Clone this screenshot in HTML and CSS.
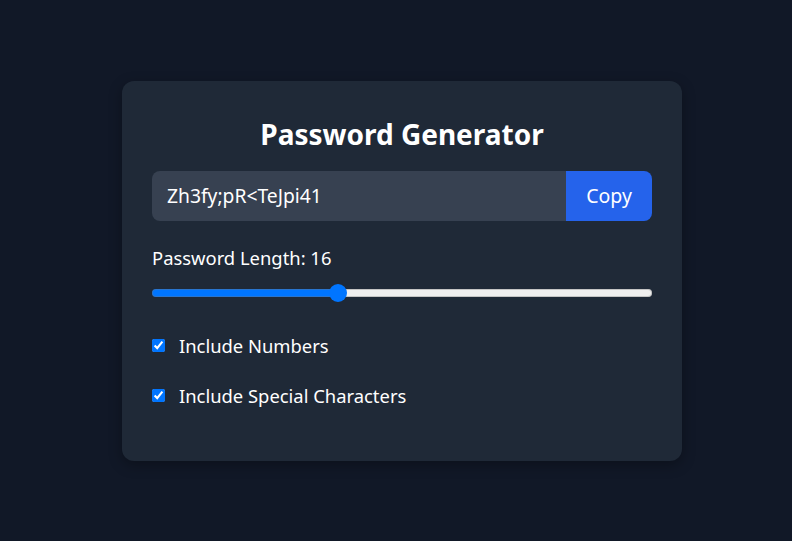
FILE: index.html
```html
<!DOCTYPE html>
<html lang="en">
<head>
<meta charset="utf-8">
<title>Password Generator</title>
<link rel="stylesheet" href="styles.css">
</head>
<body>
<main class="card">
  <h1 class="title">Password Generator</h1>
  <div class="output-row">
    <input class="output" type="text" value="Zh3fy;pR&lt;TeJpi41" readonly>
    <button class="copy-btn" type="button">Copy</button>
  </div>
  <label class="length-label" for="len">Password Length: 16</label>
  <input class="slider" id="len" type="range" min="5" max="35" value="16" style="--fill: 37%">
  <label class="option option-first"><input type="checkbox" checked><span>Include Numbers</span></label>
  <label class="option option-second"><input type="checkbox" checked><span>Include Special Characters</span></label>
</main>
</body>
</html>
```
FILE: styles.css
```css
html, body {
  margin: 0;
  padding: 0;
}
body {
  background: #111827;
  min-height: 100vh;
  box-sizing: border-box;
  padding-left: 12px;
  display: flex;
  align-items: center;
  justify-content: center;
  font-family: "Noto Sans", "Open Sans", sans-serif;
  color: #ffffff;
}
.card {
  width: 560px;
  box-sizing: border-box;
  padding: 30px;
  background: #1f2937;
  border-radius: 12px;
  box-shadow: 0 4px 14px rgba(0, 0, 0, 0.3);
  display: flex;
  flex-direction: column;
}
.title {
  margin: 6px 0 20px;
  font-size: 28px;
  line-height: 34px;
  font-weight: 700;
  text-align: center;
}
.output-row {
  display: flex;
  height: 50px;
  margin-bottom: 25px;
}
.output {
  flex: 1;
  min-width: 0;
  border: none;
  outline: none;
  background: #374151;
  color: #ffffff;
  font-family: inherit;
  font-size: 19.3px;
  padding: 0 15px;
  border-radius: 8px 0 0 8px;
}
.copy-btn {
  width: 86px;
  border: none;
  background: #2563eb;
  color: #ffffff;
  font-family: inherit;
  font-size: 19.5px;
  border-radius: 0 8px 8px 0;
  padding: 0;
}
.length-label {
  font-size: 18.4px;
  line-height: 24px;
  margin-bottom: 13px;
}
.slider {
  -webkit-appearance: none;
  appearance: none;
  width: 100%;
  margin: 0;
  height: 20px;
  background: transparent;
}
.slider::-webkit-slider-runnable-track {
  height: 8px;
  border-radius: 4px;
  box-sizing: border-box;
  background: linear-gradient(to right, #0075ff var(--fill), #efefef var(--fill));
  box-shadow: inset 0 0 0 1px rgba(118, 118, 118, 0.35);
}
.slider::-webkit-slider-thumb {
  -webkit-appearance: none;
  appearance: none;
  width: 18px;
  height: 18px;
  margin-top: -5px;
  border: none;
  border-radius: 50%;
  background: #0075ff;
}
.option {
  display: flex;
  align-items: center;
  gap: 14px;
  font-size: 18.4px;
  line-height: 24px;
}
.option input {
  margin: 0;
  width: 13px;
  height: 13px;
}
.option-first {
  margin-top: 31px;
}
.option-second {
  margin-top: 26px;
  margin-bottom: 23px;
}
```
